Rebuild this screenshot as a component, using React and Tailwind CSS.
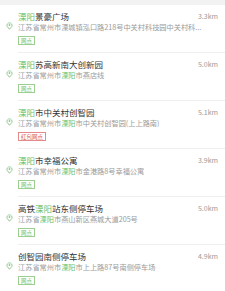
import React from "react";

const rows = [
  { title: [["溧阳", true], ["景豪广场", false]], addr: [["江苏省常州市溧城镇泓口路218号中关村科技园中关村科...", false]], dist: "3.3km", tag: "网点" },
  { title: [["溧阳", true], ["苏高新南大创新园", false]], addr: [["江苏省常州市", false], ["溧阳", true], ["市燕店线", false]], dist: "5.0km", tag: "网点" },
  { title: [["溧阳", true], ["市中关村创智园", false]], addr: [["江苏省常州市", false], ["溧阳", true], ["市中关村创智园(上上路南)", false]], dist: "5.1km", tag: "红包网点", red: true },
  { title: [["溧阳", true], ["市幸福公寓", false]], addr: [["江苏省常州市", false], ["溧阳", true], ["市金港路8号幸福公寓", false]], dist: "3.9km", tag: "网点" },
  { title: [["高铁", false], ["溧阳", true], ["站东侧停车场", false]], addr: [["江苏省", false], ["溧阳", true], ["市燕山新区燕城大道205号", false]], dist: "5.0km", tag: "网点" },
  { title: [["创智园南侧停车场", false]], addr: [["江苏省常州市", false], ["溧阳", true], ["市上上路87号南侧停车场", false]], dist: "4.9km", tag: "网点" },
];

const Parts = ({ parts }) =>
  parts.map(([t, hl], i) => (
    <span key={i} className={hl ? "text-[#6cbf6a]" : ""}>
      {t}
    </span>
  ));

const PinIcon = () => (
  <svg width="7" height="8" viewBox="0 0 7 8" fill="none">
    <path
      d="M3.5 7.3 L1 4.2 A2.6 2.6 0 1 1 6 4.2 Z"
      stroke="#8cc68a"
      strokeWidth="0.9"
      strokeLinejoin="round"
    />
    <circle cx="3.5" cy="3" r="0.9" fill="#8cc68a" />
  </svg>
);

export default function App() {
  return (
    <div
      className="w-[225px] h-[291px] overflow-hidden bg-white"
      style={{ fontFamily: '"Noto Sans CJK SC", "Noto Sans", sans-serif' }}
    >
      <div className="h-[5px] bg-[#f2f2f2]" />
      {rows.map((r, i) => (
        <div key={i} className="flex">
          <div className="w-[18px] shrink-0 flex justify-center pt-[17px] pl-[1px]">
            <PinIcon />
          </div>
          <div className="flex-1 min-w-0 border-b border-[#efefef] pt-[5px] pb-[7px] pr-[7px]">
            <div className="flex items-center justify-between h-[12px]">
              <div className="text-[8.5px] leading-[12px] text-[#333] truncate">
                <Parts parts={r.title} />
              </div>
              <div className="text-[7px] leading-[12px] text-[#999] shrink-0">{r.dist}</div>
            </div>
            <div className="text-[7.2px] leading-[11px] h-[11px] text-[#9a9a9a] whitespace-nowrap overflow-hidden">
              <Parts parts={r.addr} />
            </div>
            <div className="mt-[3px] flex">
              <span
                className={`h-[9px] px-[2px] border-[0.8px] text-[5.5px] leading-[8px] ${
                  r.red ? "border-[#e58a8a] text-[#d9534f]" : "border-[#9ccf8f] text-[#6cbf6a]"
                }`}
              >
                {r.tag}
              </span>
            </div>
          </div>
        </div>
      ))}
    </div>
  );
}
